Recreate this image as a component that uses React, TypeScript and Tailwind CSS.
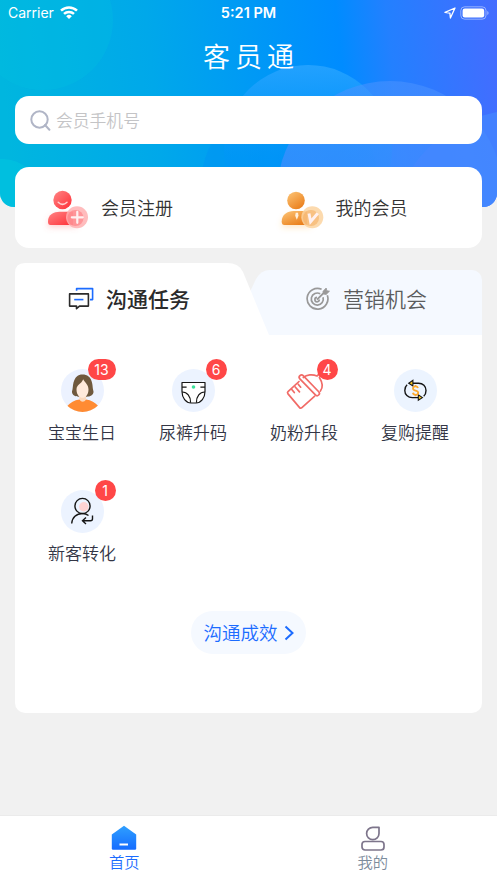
import type { ReactNode } from "react";

const HeaderBackground = () => (
  <svg className="absolute inset-x-0 top-0 h-[207px] w-full" viewBox="0 0 497 207" preserveAspectRatio="none">
    <defs>
      <linearGradient id="sky" gradientUnits="userSpaceOnUse" x1="0" y1="60" x2="497" y2="10">
        <stop offset="0" stopColor="#00b6df" />
        <stop offset="0.3" stopColor="#00a8ea" />
        <stop offset="0.68" stopColor="#008cff" />
        <stop offset="0.78" stopColor="#2380ff" />
        <stop offset="1" stopColor="#446cff" />
      </linearGradient>
      <linearGradient id="bubbleA" x1="0" y1="0" x2="0" y2="1">
        <stop offset="0" stopColor="#29a4ff" stopOpacity="0.85" />
        <stop offset="0.55" stopColor="#0096f8" stopOpacity="0.4" />
        <stop offset="1" stopColor="#0090f5" stopOpacity="0.3" />
      </linearGradient>
      <linearGradient id="bubbleB" x1="0" y1="0" x2="0" y2="1">
        <stop offset="0" stopColor="#4b92ff" stopOpacity="0.55" />
        <stop offset="1" stopColor="#3a86ff" stopOpacity="0.9" />
      </linearGradient>
      <clipPath id="headerClip">
        <path d="M0 0H497V193a14 14 0 0 1-14 14H14a14 14 0 0 1-14-14z" />
      </clipPath>
    </defs>
    <g clipPath="url(#headerClip)">
      <rect width="497" height="207" fill="url(#sky)" />
      <circle cx="43" cy="20" r="70" fill="#00bfe0" fillOpacity="0.3" />
      <circle cx="3" cy="195" r="36" fill="#00c4e0" fillOpacity="0.6" />
      <circle cx="290" cy="185" r="89" fill="#008af5" fillOpacity="0.3" />
      <circle cx="308" cy="149" r="84" fill="url(#bubbleA)" />
      <circle cx="390" cy="194" r="113" fill="url(#bubbleB)" />
      <circle cx="520" cy="240" r="130" fill="#4488ff" fillOpacity="0.7" />
    </g>
  </svg>
);

const StatusBar = () => (
  <div className="flex h-[26px] items-center px-2 font-['Inter',sans-serif] text-[14px] text-white">
    <div className="flex flex-1 items-center gap-[6px]">
      <span className="pb-px">Carrier</span>
      <svg className="mb-[2px] h-[13px] w-[18px]" viewBox="0 0 18 13" fill="none" stroke="#fff" strokeWidth="2.5">
        <path d="M1 4.6a11.6 11.6 0 0 1 16 0" />
        <path d="M4 7.9a7.3 7.3 0 0 1 10 0" />
        <path d="M9 13 6.2 10.2a4 4 0 0 1 5.6 0z" fill="#fff" stroke="none" />
      </svg>
    </div>
    <span className="text-[14.5px] font-semibold">5:21 PM</span>
    <div className="flex flex-1 items-center justify-end gap-[4px] pb-px">
      <svg className="h-3 w-3" viewBox="0 0 12 12" fill="none" stroke="#fff" strokeWidth="1.3" strokeLinejoin="round">
        <path d="M11 1 1 5.4l4.9.7L6.4 11z" />
      </svg>
      <svg className="h-[14px] w-[29px]" viewBox="0 0 29 14">
        <rect x="0.8" y="0.8" width="25.2" height="12.4" rx="3.8" fill="none" stroke="#fff" strokeOpacity="0.45" />
        <rect x="2.6" y="2.6" width="21.6" height="8.8" rx="2.2" fill="#fff" />
        <path d="M27.3 5a2.2 2.2 0 0 1 0 4z" fill="#fff" fillOpacity="0.5" />
      </svg>
    </div>
  </div>
);

const RegisterIcon = () => (
  <svg className="h-12 w-12" viewBox="0 0 48 48" overflow="visible">
    <defs>
      <linearGradient id="redFill" x1="0" y1="0" x2="1" y2="1">
        <stop offset="0" stopColor="#ff8585" />
        <stop offset="1" stopColor="#ff2e36" />
      </linearGradient>
      <filter id="softShadow" x="-30%" y="-30%" width="160%" height="180%">
        <feGaussianBlur stdDeviation="3" />
      </filter>
    </defs>
    <path d="M8 41q0-12 14-13t15 13z" transform="translate(0 2)" fill="#ff6b6b" fillOpacity="0.35" filter="url(#softShadow)" />
    <circle cx="22.5" cy="16" r="9.2" fill="url(#redFill)" />
    <path d="M18.2 18.2q4.3 4.3 8.8 0" fill="none" stroke="#ffd2d2" strokeWidth="1.5" strokeLinecap="round" />
    <path d="M8 37.5C8 30.5 14 27.7 19.5 27.7H33v13.4H10.5Q8 41.1 8 37.5z" fill="url(#redFill)" />
    <circle cx="37" cy="33.3" r="11" fill="#ffb0b2" fillOpacity="0.85" />
    <circle cx="35.5" cy="34" r="8" fill="#ff7c80" fillOpacity="0.6" />
    <path d="M37.3 27.8v11M31.8 33.3h11" stroke="#fff0f0" strokeWidth="2.2" strokeLinecap="round" />
  </svg>
);

const MemberIcon = () => (
  <svg className="h-12 w-12" viewBox="0 0 48 48" overflow="visible">
    <defs>
      <linearGradient id="orangeFill" x1="0" y1="0" x2="0.7" y2="1">
        <stop offset="0" stopColor="#fdc678" />
        <stop offset="1" stopColor="#ea7f1c" />
      </linearGradient>
    </defs>
    <path d="M8 43q0-12 14-13t15 13z" fill="#ffa63d" fillOpacity="0.3" filter="url(#softShadow)" />
    <circle cx="22" cy="16.5" r="8.8" fill="url(#orangeFill)" />
    <path d="M7.7 37.5C7.7 30.5 13.5 27 19.5 27H33v14H10.5Q7.7 41 7.7 37.5z" fill="url(#orangeFill)" />
    <path d="M21.7 28.8h2.3l.5 3-1.7 4-1.6-4z" fill="#fff0dc" />
    <circle cx="38.3" cy="33.2" r="11" fill="#fbd3a0" fillOpacity="0.85" />
    <circle cx="37" cy="34" r="8" fill="#f3a857" fillOpacity="0.5" />
    <path d="m35 29.5 1.6 8.3 7.2-8.5" fill="none" stroke="#fff0ef" strokeWidth="2.9" />
  </svg>
);

const ChatIcon = () => (
  <svg className="h-6 w-[26px]" viewBox="0 0 26 24" fill="none" strokeWidth="1.6" strokeLinejoin="round">
    <path d="M8.6 3.7V1.6h16v11h-2.6" stroke="#1c6cff" />
    <path d="M1.6 6.9h18.8v12.2h-8.9l-3 2.6v-2.6H1.6z" stroke="#2b2b2b" />
    <path d="M6.2 12.6h9.2" stroke="#1c6cff" />
  </svg>
);

const TargetIcon = () => (
  <svg className="h-6 w-6" viewBox="0 0 24 24" fill="none" stroke="#999" strokeWidth="1.7">
    <path d="M15.6 2.2A10.4 10.4 0 1 0 21.3 8.200" />
    <path d="M14.2 6.8A6 6 0 1 0 17 10.2" />
    <path d="M13.3 12.6A2.2 2.2 0 1 1 11 10.4" />
    <path d="m11 12.7 7.5-7.5" strokeWidth="1.9" />
    <path d="m17 4.3 3.200-3.300.6 2.700 2.700.5-3.400 3.300-2.700-.5z" fill="#999" strokeWidth="0.8" />
  </svg>
);

const BirthdayIcon = () => (
  <svg className="h-[43px] w-[43px]" viewBox="0 0 43 43">
    <defs>
      <clipPath id="round">
        <circle cx="21.5" cy="21.5" r="21.5" />
      </clipPath>
    </defs>
    <g clipPath="url(#round)">
      <rect width="43" height="43" fill="#ecf2ff" />
      <path d="M11 22.5c1-3 .6-5.500 1.500-9C14 8 17 5.400 21.500 5.400S30 8 31 13.500c.9 3.500.5 6 1.500 9 .3 3.500-3.700 5.200-6.800 5.200h-8c-3.200 0-7-1.700-6.700-5.200z" fill="#6f593e" />
      <path d="M18.3 26h6.800v7h-6.800z" fill="#fbd9bd" />
      <path d="M6 37.200q5-5.400 12.300-6.600 3.400 4.400 6.900 0 7.300 1.200 12.300 6.600V43H6z" fill="#ff8b33" />
      <path d="M15.500 20.500c0-5 5-5.500 6.700-10.200 1 2.700 5.300 5 5.300 10.200 0 5-2.800 8.300-6 8.300s-6-3.300-6-8.300z" fill="#ffeadb" />
    </g>
  </svg>
);

const DiaperIcon = () => (
  <svg className="h-[43px] w-[43px]" viewBox="0 0 43 43" fill="none" stroke="#151515" strokeWidth="1.2" strokeLinejoin="round">
    <circle cx="21.5" cy="21.5" r="21.5" fill="#ecf3ff" stroke="none" />
    <path d="M10 13.5h23v9c0 6.500-4 11.500-9 11.500h-5c-5 0-9-5-9-11.500z" fill="#fff" />
    <path d="M10 18.2h4.600M28.400 18.200H33M10 23c5-.2 8.800 4.300 8.600 10.800M33 23c-5-.2-8.800 4.300-8.600 10.800" />
    <circle cx="21.5" cy="18" r="1.8" fill="#3be19b" stroke="none" />
  </svg>
);

const BottleIcon = () => (
  <svg className="h-[43px] w-[43px]" viewBox="0 0 43 43" fill="none" stroke="#f16b67" strokeWidth="1.7" strokeLinecap="round" strokeLinejoin="round" overflow="visible">
    <path d="m16 12.500-11 10.200q-1 1 0 2.200l11.600 13.700q1 1.200 2.300 0l12.800-11.500" />
    <rect x="12.800" y="14" width="27" height="4.600" rx="2.300" transform="rotate(46 26.300 16.300)" />
    <path d="M20.300 8.500c3.500-3 9.200-3.500 13.700-1.500l3-2.700 1.400 1.500-2 2.700c2.600 4.200 3.900 9.800 1 13.500" />
    <path d="m8.800 20.500 2.500 3M12 17.800l4.500 5.100M15.200 15.200l2.500 3" />
  </svg>
);

const RepurchaseIcon = () => (
  <svg className="h-[43px] w-[43px]" viewBox="0 0 43 43" fill="none" stroke="#151515" strokeWidth="1.4">
    <circle cx="21.5" cy="21.5" r="21.5" fill="#ecf4ff" stroke="none" />
    <path d="M18.7 14.200h5.800c4.500 0 7.500 3.300 7.500 7.300 0 2.600-.8 4.500-2.300 5.800M24 28.600h-5.700c-4.500 0-7.500-3.200-7.500-7.200 0-2.600.8-4.400 2.300-5.700" />
    <path d="m14.700 14.200 4.200-2.800v5.500zM28.500 28.600l-4.200-2.800v5.500z" fill="#f7c51e" strokeWidth="1.1" />
    <path d="M24 19c-.4-1.300-1.300-1.700-2.500-1.700-1.500 0-2.500.8-2.500 2.100 0 3 5.200 1.200 5.200 4.300 0 1.300-1.100 2.100-2.600 2.100-1.400 0-2.400-.6-2.700-2M21.500 15.900v1.600M21.500 25.600v1.600" stroke="#fba92f" strokeWidth="1.8" />
  </svg>
);

const ConvertIcon = () => (
  <svg className="h-[43px] w-[43px]" viewBox="0 0 43 43" fill="none" stroke="#151515" strokeWidth="1.4">
    <circle cx="21.5" cy="21.5" r="21.5" fill="#ecf3ff" stroke="none" />
    <circle cx="22.8" cy="16.8" r="4.7" fill="#ffd3d3" stroke="none" />
    <circle cx="21.5" cy="16" r="7.6" />
    <path d="M10.7 33.500c.4-6 4.600-10 10.800-10 2.500 0 4.300.7 6 2M31.500 25.500v3.200c0 1.300-.6 2-2 2h-7.700M25 27.500l-3.500 3.200 3.500 3.200" />
  </svg>
);

type Task = {
  label: string;
  icon: ReactNode;
  count?: number;
};

const tasks: Task[] = [
  { label: "宝宝生日", icon: <BirthdayIcon />, count: 13 },
  { label: "尿裤升码", icon: <DiaperIcon />, count: 6 },
  { label: "奶粉升段", icon: <BottleIcon />, count: 4 },
  { label: "复购提醒", icon: <RepurchaseIcon /> },
  { label: "新客转化", icon: <ConvertIcon />, count: 1 },
];

const TaskItem = ({ label, icon, count }: Task) => (
  <div className="flex h-[121px] flex-col items-center">
    <div className="relative">
      {icon}
      {count && (
        <span
          className={`absolute top-[-10px] flex h-[21px] items-center justify-center rounded-full bg-[#ff4747] font-['Inter',sans-serif] text-[14px] text-white ${
            count > 9 ? "left-[27px] w-7" : "left-[34px] w-[21px]"
          }`}
        >
          {count}
        </span>
      )}
    </div>
    <span className="mt-2 text-[17px] font-[350] leading-6 text-[#333646]">{label}</span>
  </div>
);

export default function App() {
  return (
    <main className="relative flex h-[883px] flex-col overflow-hidden bg-[#f1f1f1] font-['Noto_Sans_CJK_SC',sans-serif]">
      <HeaderBackground />

      {/* Header */}
      <header className="relative">
        <StatusBar />
        <h1 className="flex h-[70px] items-center justify-center pb-[10px] pl-[5px] text-[27px] font-[350] tracking-[5px] text-white">
          客员通
        </h1>
      </header>

      {/* Search */}
      <div className="relative mx-[15px] flex h-12 shrink-0 items-center gap-[5px] rounded-[14px] bg-white pl-[15px]">
        <svg className="h-[21px] w-[21px]" viewBox="0 0 21 21" fill="none" stroke="#b0b5c6" strokeWidth="2">
          <circle cx="9.5" cy="9.5" r="8.2" />
          <path d="m15 15 4.4 4.7" strokeLinecap="round" />
        </svg>
        <span className="pt-[2px] text-[16.8px] font-[350] text-[#c4c4c6]">会员手机号</span>
      </div>

      {/* Member shortcuts */}
      <section className="relative mx-[15px] mt-[23px] grid h-[81px] shrink-0 grid-cols-2 rounded-[14px] bg-white text-[18px] font-[350] text-[#333]">
        <div className="flex items-center gap-[13px] pl-[25px]">
          <RegisterIcon />
          <span>会员注册</span>
        </div>
        <div className="flex items-center gap-[14px] pl-[25px]">
          <MemberIcon />
          <span>我的会员</span>
        </div>
      </section>

      {/* Tasks */}
      <section className="mx-[15px] mt-[15px] flex h-[450px] shrink-0 flex-col rounded-b-[10px] bg-gradient-to-b from-transparent from-[72px] to-white to-[72px]">
        <div className="relative flex h-[72px] shrink-0">
          <svg className="absolute inset-0 h-full w-full" viewBox="0 0 467 72" preserveAspectRatio="none">
            <path d="M225 72V50L241 16q5-9 14-9H457a10 10 0 0 1 10 10V72z" fill="#f5f9ff" />
            <path d="M0 72V10Q0 0 10 0H212q12 0 16 9L254 72H0z" fill="#fff" />
          </svg>
          <div className="relative flex w-[237px] items-center gap-[12px] pl-[53px] text-[21px] font-medium text-[#2b2b2b]">
            <ChatIcon />
            <span>沟通任务</span>
          </div>
          <div className="relative flex flex-1 items-center gap-[13px] pl-[54px] text-[21px] font-[350] text-[#5c5d5e]">
            <TargetIcon />
            <span>营销机会</span>
          </div>
        </div>

        <div className="grid grid-cols-4 px-[11.5px] pt-[34px]">
          {tasks.map((task) => (
            <TaskItem key={task.label} {...task} />
          ))}
        </div>

        <button className="mx-auto flex h-[43px] w-[115px] items-center justify-center gap-[6px] rounded-full bg-[#f5f9ff] text-[18.5px] font-[350] text-[#1c6cff]">
          沟通成效
          <svg className="h-4 w-[10px]" viewBox="0 0 10 16" fill="none" stroke="#1c6cff" strokeWidth="2">
            <path d="m1.5 1.5 7 6.500-7 6.500" />
          </svg>
        </button>
      </section>

      {/* Tab bar */}
      <nav className="mt-auto grid h-[68px] shrink-0 grid-cols-2 border-t border-[#ebebeb] bg-white text-[15.3px] leading-5">
        <div className="flex flex-col items-center pt-[9px] text-[#1c6cff]">
          <svg className="h-[26px] w-[26px]" viewBox="0 0 26 26">
            <defs>
              <linearGradient id="home" x1="0" y1="0" x2="0" y2="1">
                <stop offset="0" stopColor="#2fa0ff" />
                <stop offset="1" stopColor="#156cff" />
              </linearGradient>
            </defs>
            <path d="M13 .7 25.2 9.500V23.500q0 1.300-1.300 1.300H2.100Q.8 24.800.8 23.500V9.500z" fill="url(#home)" />
            <path d="M8.500 19.500h8.500" stroke="#fff" strokeWidth="2" />
          </svg>
          <span className="font-[350]">首页</span>
        </div>
        <div className="flex flex-col items-center pt-[9px] text-[#7c8c9c]">
          <svg className="h-[26px] w-[26px]" viewBox="0 0 26 26" fill="none" stroke="#7d758b" strokeWidth="1.7">
            <path d="M19 2.300v6.200a6.200 6.200 0 1 1-6.200-6.200z" strokeLinejoin="round" />
            <rect x="2" y="16.500" width="22" height="8.500" rx="3" />
          </svg>
          <span className="font-[350]">我的</span>
        </div>
      </nav>
    </main>
  );
}
